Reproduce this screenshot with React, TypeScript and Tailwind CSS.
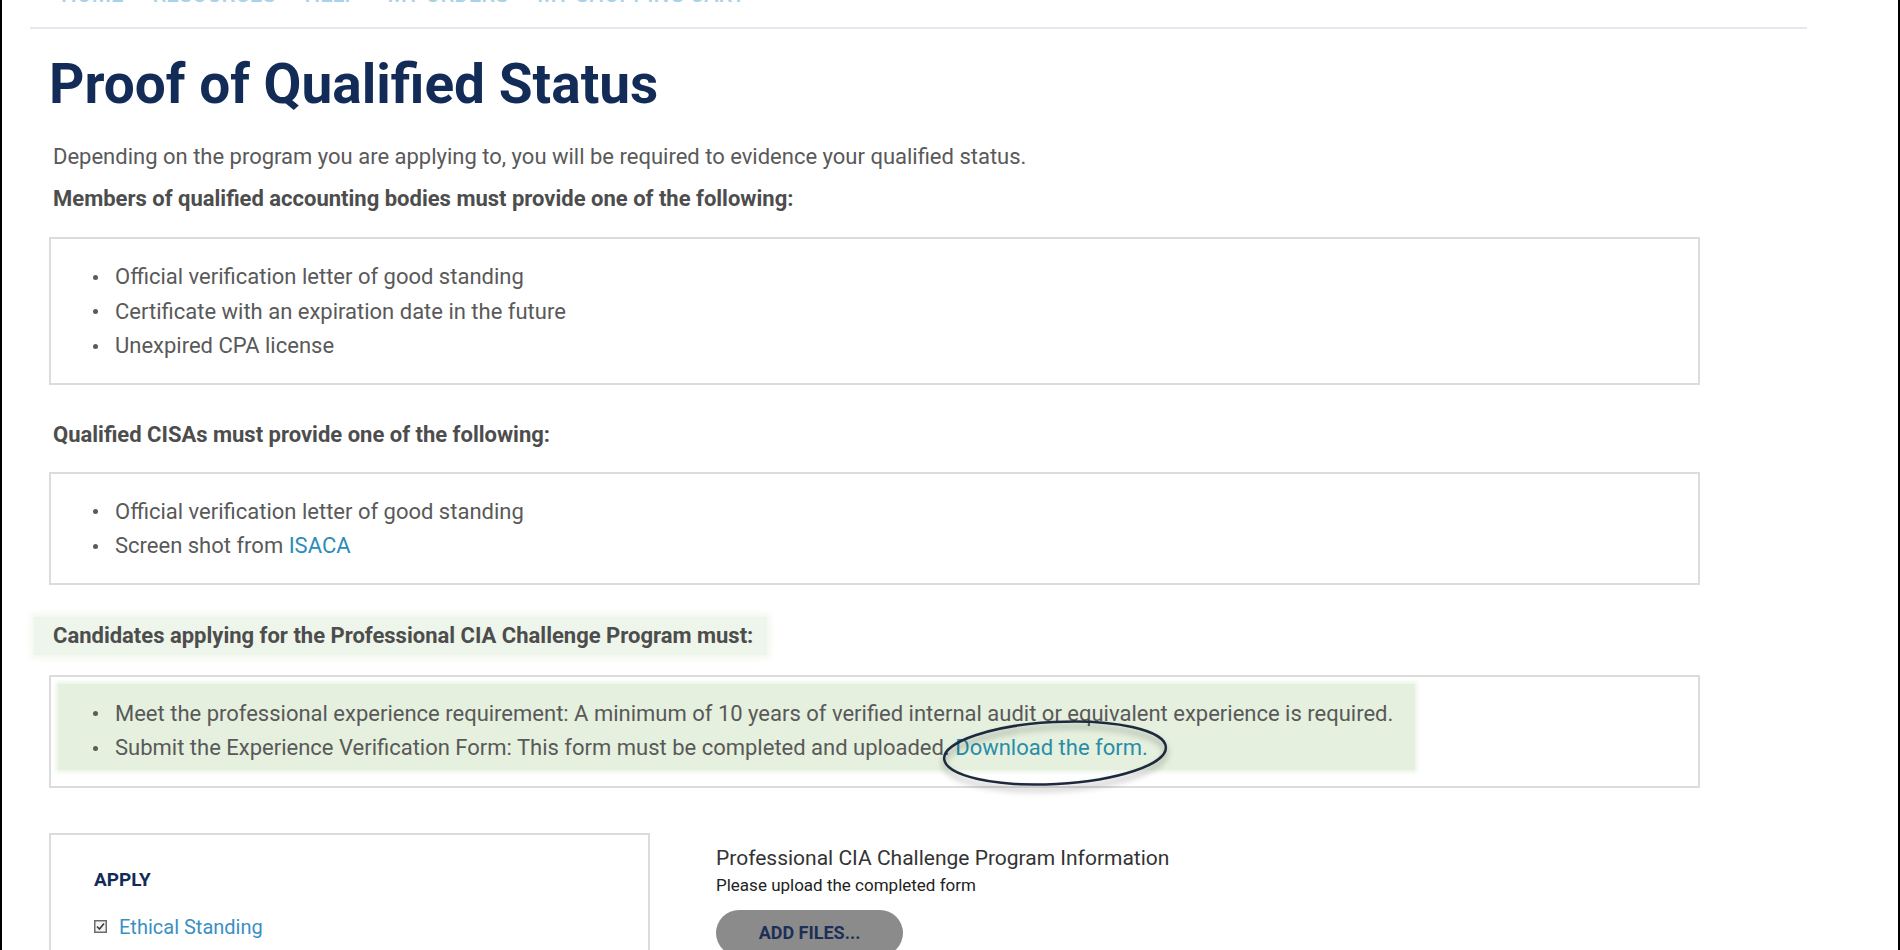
import React from "react";

const navItems = ["Home", "Resources", "Help", "My Orders", "My Shopping Cart"];

const Bullet = () => (
  <span className="flex w-[22px] shrink-0 items-center">
    <span className="h-[5px] w-[5px] rounded-full bg-[#5b5b5b]" />
  </span>
);

const Item = ({ children }: { children: React.ReactNode }) => (
  <li className="flex items-center">
    <Bullet />
    <span>{children}</span>
  </li>
);

const Box = ({ children }: { children: React.ReactNode }) => (
  <div className="w-[1651px] border-2 border-[#dcdcdc] pb-[19px] pl-[42px] pt-[21px]">
    <ul className="leading-[34.5px]">{children}</ul>
  </div>
);

const App = () => {
  return (
    <div className="h-[950px] overflow-hidden border-x-2 border-black bg-white font-['Roboto','Liberation_Sans',sans-serif] text-[22px] text-[#595959]">
      <div className="w-[1805px] pl-[28px]">
        <nav className="-mt-[18px] flex gap-[29px] pl-[31px] text-[22px] font-medium uppercase leading-[26px] text-[#a9d2e8]">
          {navItems.map((n) => (
            <span key={n}>{n}</span>
          ))}
        </nav>
        <div className="mt-[19px] h-[2px] bg-[#e4e9ef]" />

        <main className="relative pl-[19px]">
          <h1 className="mt-[23px] text-[55px] font-bold leading-[64px] text-[#132c57]">
            Proof of Qualified Status
          </h1>

          <p className="mt-[24px] pl-[4px] leading-[34px]">
            Depending on the program you are applying to, you will be required
            to evidence your qualified status.
          </p>
          <p className="mt-[8px] pl-[4px] font-bold leading-[34px] text-[#4d4d4d]">
            Members of qualified accounting bodies must provide one of the
            following:
          </p>

          <div className="mt-[21px]">
            <Box>
              <Item>Official verification letter of good standing</Item>
              <Item>Certificate with an expiration date in the future</Item>
              <Item>Unexpired CPA license</Item>
            </Box>
          </div>

          <p className="mt-[33px] pl-[4px] font-bold leading-[34px] text-[#4d4d4d]">
            Qualified CISAs must provide one of the following:
          </p>

          <div className="mt-[20px]">
            <Box>
              <Item>Official verification letter of good standing</Item>
              <Item>
                Screen shot from <a className="text-[#2a8db8]">ISACA</a>
              </Item>
            </Box>
          </div>

          <div className="-ml-[15px] mt-[32px] w-[733px] bg-[#eef5ea] py-[2px] pl-[19px] shadow-[0_0_6px_4px_#f4f9f1]">
            <p className="font-bold leading-[34px] text-[#4d4d4d]">
              Candidates applying for the Professional CIA Challenge Program
              must:
            </p>
          </div>

          <div className="mt-[20px] w-[1651px] border-2 border-[#dcdcdc] pb-[16px] pl-[7px] pt-[7px]">
            <div className="w-[1357px] bg-[#e5f0de] pb-[4px] pl-[35px] pt-[13px] shadow-[0_0_4px_2px_#eaf3e4]">
              <ul className="leading-[34.5px]">
                <Item>
                  Meet the professional experience requirement: A minimum of 10
                  years of verified internal audit or equivalent experience is
                  required.
                </Item>
                <Item>
                  Submit the Experience Verification Form: This form must be
                  completed and uploaded.{" "}
                  <a className="text-[#2a8da8]">Download the form.</a>
                </Item>
              </ul>
            </div>
          </div>

          <svg
            className="pointer-events-none absolute left-[900px] top-[653px] drop-shadow-[0_5px_3px_rgba(0,0,0,0.35)]"
            width="250"
            height="100"
            viewBox="0 0 250 100"
          >
            <ellipse
              cx="125"
              cy="48"
              rx="111"
              ry="31"
              transform="rotate(-3 125 48)"
              fill="none"
              stroke="#1d2a3d"
              strokeWidth="2.5"
            />
          </svg>

          <div className="mt-[45px] flex gap-[66px]">
            <div className="h-[200px] w-[601px] shrink-0 border-2 border-[#dcdcdc] pl-[43px] pt-[33px]">
              <div className="text-[19px] font-bold leading-[24px] text-[#132c57]">
                APPLY
              </div>
              <div className="mt-[23px] flex items-center gap-[12px] text-[20px] leading-[24px]">
                <svg width="13" height="13" viewBox="0 0 13 13">
                  <rect
                    x="0.75"
                    y="0.75"
                    width="11.5"
                    height="11.5"
                    fill="#f4f4f4"
                    stroke="#6b6b6b"
                    strokeWidth="1.5"
                  />
                  <path
                    d="M3 6.5 L5.5 9 L10 3.5"
                    fill="none"
                    stroke="#3b3b3b"
                    strokeWidth="1.6"
                  />
                </svg>
                <a className="text-[#3a8fc3]">Ethical Standing</a>
              </div>
            </div>

            <div className="pt-[12px]">
              <div className="text-[21px] leading-[26px] text-[#333333]">
                Professional CIA Challenge Program Information
              </div>
              <div className="mt-[4px] text-[17px] leading-[20px] text-[#222222]">
                Please upload the completed form
              </div>
              <button className="mt-[15px] flex h-[46px] w-[187px] items-center justify-center rounded-full bg-[#8b8b8b] text-[18px] font-bold text-[#1b2f57]">
                ADD FILES...
              </button>
            </div>
          </div>
        </main>
      </div>
    </div>
  );
};

export default App;
